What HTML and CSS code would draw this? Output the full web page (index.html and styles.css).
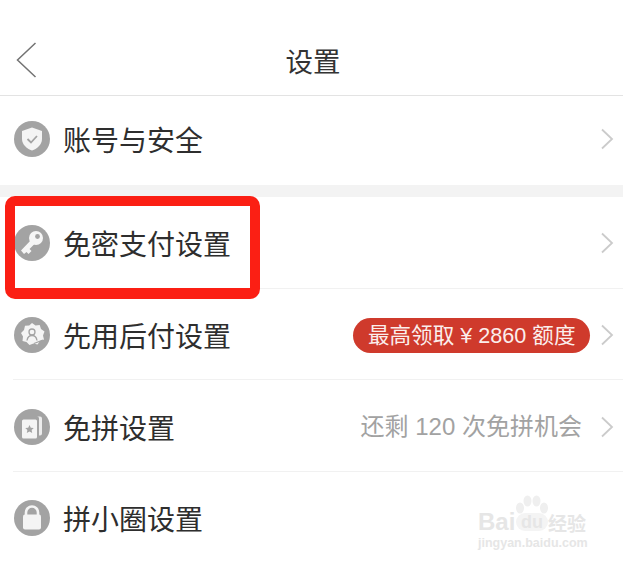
FILE: index.html
```html
<!DOCTYPE html>
<html lang="zh-CN">
<head>
    <meta charset="UTF-8">
    <meta name="viewport" content="width=device-width, initial-scale=1.0">
    <title>设置</title>
    <link rel="stylesheet" href="styles.css">
</head>
<body>
    <div class="page">
        <header class="topbar">
            <svg class="back" width="22" height="36" viewBox="0 0 22 36"><path d="M20.500 1L2.500 18l18 17"/></svg>
            <h1 class="title">设置</h1>
        </header>

        <section class="group">
            <div class="row row-single">
                <svg class="icon" viewBox="0 0 36 36">
                    <circle cx="18" cy="18" r="18" fill="#a3a3a3"/>
                    <path d="M18 6.500l10 3.500v8c0 5.500-4.500 9.500-10 11.500-5.500-2-10-6-10-11.500v-8z" fill="#f4f4f4"/>
                    <path d="M13.500 18l3.500 3.500 6-6.500" fill="none" stroke="#a3a3a3" stroke-width="1.800"/>
                </svg>
                <span class="label">账号与安全</span>
                <svg class="chevron" viewBox="0 0 14 22"><path d="M2 1.500l10 9.500-10 9.500"/></svg>
            </div>
        </section>

        <div class="band"></div>

        <section class="group">
            <div class="row">
                <svg class="icon" viewBox="0 0 36 36">
                    <circle cx="18" cy="18" r="18" fill="#a3a3a3"/>
                    <circle cx="22" cy="13" r="7" fill="#f6f6f6"/>
                    <circle cx="23.500" cy="11.500" r="2.400" fill="#a3a3a3"/>
                    <path d="M17.500 14.500L7 25.500l3 3.500 2.500-2 2 2 3-3-2-2 6-6z" fill="#f6f6f6"/>
                </svg>
                <span class="label">免密支付设置</span>
                <svg class="chevron" viewBox="0 0 14 22"><path d="M2 1.500l10 9.500-10 9.500"/></svg>
            </div>
            <div class="row">
                <svg class="icon" viewBox="0 0 36 36">
                    <circle cx="18" cy="18" r="18" fill="#a3a3a3"/>
                    <path d="M18 6l3.500 2.500 4.200-.5 1.300 4 3.500 2.500-1.500 4 1 4-4 1.500-2.500 3.500-4-1-4 1.500-3-3-4-1 .5-4.500-2-3.500 3-3 1-4.200 4.200-.3z" fill="#f4f4f4"/>
                    <circle cx="18" cy="15" r="3" fill="none" stroke="#a3a3a3" stroke-width="1.300"/>
                    <path d="M13 23.500c.5-3 2.300-5 5-5s4.500 2 5 5" fill="none" stroke="#a3a3a3" stroke-width="1.300"/>
                    <path d="M20 26.500l9-3.500" stroke="#a3a3a3" stroke-width="1.300"/>
                </svg>
                <span class="label">先用后付设置</span>
                <span class="pill">最高领取 ¥ 2860 额度</span>
                <svg class="chevron" viewBox="0 0 14 22"><path d="M2 1.500l10 9.500-10 9.500"/></svg>
            </div>
            <div class="row">
                <svg class="icon" viewBox="0 0 36 36">
                    <circle cx="18" cy="18" r="18" fill="#a3a3a3"/>
                    <path d="M15 7.500h11a2 2 0 0 1 2 2v15a2 2 0 0 1-2 2h-1v-17a2 2 0 0 0-2-2z" fill="#ececec"/>
                    <rect x="8" y="10.500" width="15" height="19" rx="1.500" fill="#f4f4f4"/>
                    <path d="M15.500 16l1.300 2.700 3 .4-2.200 2 .6 3-2.700-1.500-2.700 1.500.6-3-2.200-2 3-.4z" fill="#a3a3a3"/>
                </svg>
                <span class="label">免拼设置</span>
                <span class="hint">还剩 120 次免拼机会</span>
                <svg class="chevron" viewBox="0 0 14 22"><path d="M2 1.500l10 9.500-10 9.500"/></svg>
            </div>
            <div class="row">
                <svg class="icon" viewBox="0 0 36 36">
                    <circle cx="18" cy="18" r="18" fill="#a3a3a3"/>
                    <path d="M12 16v-3.500a6 6 0 0 1 12 0v3.500" fill="none" stroke="#f4f4f4" stroke-width="2.600"/>
                    <rect x="9" y="14.500" width="18" height="15" rx="2" fill="#f4f4f4"/>
                </svg>
                <span class="label">拼小圈设置</span>
            </div>
        </section>

        <div class="highlight"></div>

        <div class="watermark">
            <svg class="paw" width="34" height="22" viewBox="0 0 34 22">
                <ellipse cx="5" cy="13" rx="4" ry="5.500"/>
                <ellipse cx="12.500" cy="6" rx="4" ry="5.500"/>
                <ellipse cx="21.500" cy="6" rx="4" ry="5.500"/>
                <ellipse cx="29" cy="13" rx="4" ry="5.500"/>
            </svg>
            <div class="wm-brand">
                <span class="wm-bai">Bai</span>
                <span class="wm-du">du</span>
                <span class="wm-cn">经验</span>
            </div>
            <div class="wm-url">jingyan.baidu.com</div>
        </div>
    </div>
</body>
</html>
```

FILE: styles.css
```css
* {
    box-sizing: border-box;
}
body {
    margin: 0;
    background-color: #ffffff;
    font-family: "Noto Sans CJK SC", "Liberation Sans", sans-serif;
    color: #333333;
}
.page {
    position: relative;
    width: 623px;
    height: 562px;
    overflow: hidden;
}
.topbar {
    position: relative;
    display: flex;
    align-items: center;
    justify-content: center;
    height: 96px;
    padding-top: 24px;
    padding-left: 3px;
    border-bottom: 1px solid #e3e3e3;
}
.back {
    position: absolute;
    left: 15px;
    top: 42px;
    fill: none;
    stroke: #737373;
    stroke-width: 1.500;
}
.title {
    margin: 0;
    font-size: 27.500px;
    font-weight: 400;
    line-height: 40px;
}
.band {
    height: 12px;
    background-color: #f3f3f3;
}
.row {
    display: flex;
    align-items: center;
    height: 91.700px;
    margin-left: 13px;
    padding-top: 2px;
    padding-right: 9px;
    border-bottom: 1px solid #f1f1f1;
}
.row:last-child {
    padding-top: 0;
    border-bottom: none;
}
.row-single {
    height: 89px;
    padding-top: 0;
    padding-bottom: 4px;
}
.icon {
    flex: none;
    width: 36px;
    height: 36px;
    margin-left: 1px;
}
.label {
    flex: 1;
    margin-left: 13px;
    font-size: 28px;
    line-height: 40px;
    color: #2e2e2e;
}
.chevron {
    flex: none;
    width: 14px;
    height: 22px;
    fill: none;
    stroke: #cbcbcb;
    stroke-width: 1.800;
}
.pill {
    height: 35px;
    margin-right: 10px;
    padding: 0 14.500px;
    border-radius: 18px;
    background-color: #cf3a2c;
    color: #fbeeec;
    font-family: "Liberation Sans", "Noto Sans CJK SC", sans-serif;
    font-size: 21.600px;
    line-height: 35px;
    white-space: nowrap;
}
.hint {
    margin-right: 18px;
    color: #a2a2a2;
    font-family: "Liberation Sans", "Noto Sans CJK SC", sans-serif;
    font-size: 24px;
    line-height: 34px;
    white-space: nowrap;
}
/* red annotation drawn over the screenshot */
.highlight {
    position: absolute;
    left: 5px;
    top: 196px;
    width: 255px;
    height: 103px;
    border: 10px solid #fb1f14;
    border-bottom-width: 11px;
    border-radius: 10px;
}
.watermark {
    position: absolute;
    left: 478px;
    top: 495px;
    width: 112px;
    color: #e6e6e6;
    font-family: "Liberation Sans", sans-serif;
}
.paw {
    display: block;
    margin-left: 37px;
    fill: #efefef;
}
.wm-brand {
    display: flex;
    align-items: center;
    height: 20px;
    margin-top: -5px;
    font-weight: 700;
    white-space: nowrap;
}
.wm-bai {
    width: 38px;
    font-size: 24px;
}
.wm-du {
    width: 32px;
    border-radius: 10px;
    background-color: #f4f4f4;
    font-size: 18px;
    line-height: 18px;
    text-align: center;
}
.wm-cn {
    margin-left: 0;
    font-family: "Noto Sans CJK SC", sans-serif;
    font-size: 19px;
}
.wm-url {
    margin-top: 3px;
    font-size: 12.500px;
    font-weight: 700;
    line-height: 16px;
    white-space: nowrap;
}
```
